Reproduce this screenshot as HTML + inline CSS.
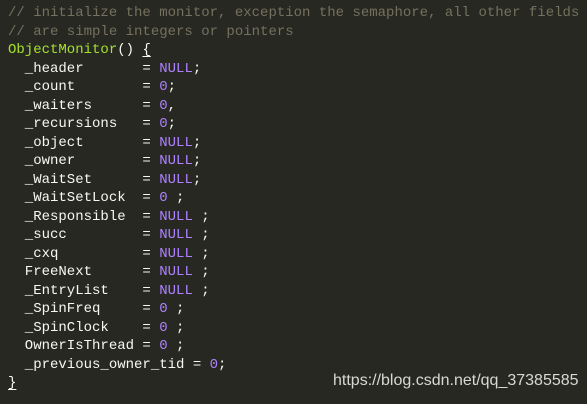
<!DOCTYPE html>
<html><head><meta charset="utf-8"><style>
html,body{margin:0;padding:0;width:587px;height:404px;background:#272822;overflow:hidden}
pre{margin:0;position:absolute;left:8px;top:4px;font-family:"Liberation Mono",monospace;font-size:14px;line-height:18.5px;color:#f8f8f2}
.c{color:#75715e}.f{color:#a6e22e}.n{color:#ae81ff}
u{text-decoration:underline;text-underline-offset:3px}
.w{position:absolute;left:333px;top:372px;font-family:"Liberation Sans",sans-serif;font-size:16px;color:#d8d8d4}
</style></head><body>
<pre><span class="c">// initialize the monitor, exception the semaphore, all other fields
// are simple integers or pointers</span>
<span class="f">ObjectMonitor</span>() <u>{</u>
  _header       = <span class="n">NULL</span>;
  _count        = <span class="n">0</span>;
  _waiters      = <span class="n">0</span>,
  _recursions   = <span class="n">0</span>;
  _object       = <span class="n">NULL</span>;
  _owner        = <span class="n">NULL</span>;
  _WaitSet      = <span class="n">NULL</span>;
  _WaitSetLock  = <span class="n">0</span> ;
  _Responsible  = <span class="n">NULL</span> ;
  _succ         = <span class="n">NULL</span> ;
  _cxq          = <span class="n">NULL</span> ;
  FreeNext      = <span class="n">NULL</span> ;
  _EntryList    = <span class="n">NULL</span> ;
  _SpinFreq     = <span class="n">0</span> ;
  _SpinClock    = <span class="n">0</span> ;
  OwnerIsThread = <span class="n">0</span> ;
  _previous_owner_tid = <span class="n">0</span>;
<u>}</u></pre>
<div class="w">https://blog.csdn.net/qq_37385585</div>
</body></html>
